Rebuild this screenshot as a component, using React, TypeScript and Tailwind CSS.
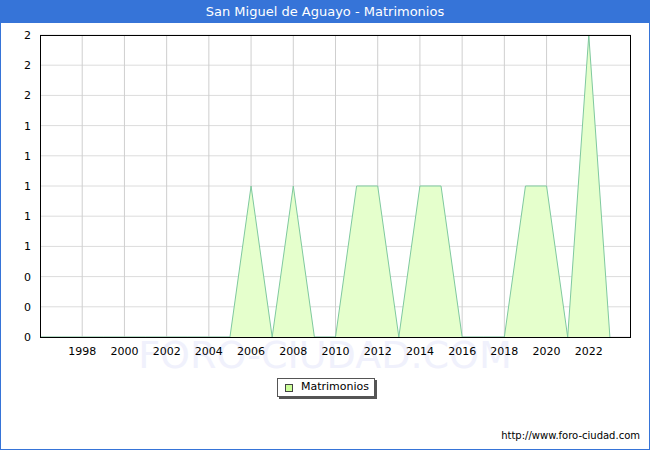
import React from "react";

const data: Record<number, number> = {2006:1,2008:1,2011:1,2012:1,2014:1,2015:1,2019:1,2020:1,2022:2};
const X = (y: number) => 40 + (y - 1996) * (591 / 28);
const Y = (v: number) => 337 - v * 151;

export default function App() {
  const years: number[] = [];
  for (let y = 1996; y <= 2023; y++) years.push(y);
  const pts = years.map((y) => `${X(y)},${Y(data[y] || 0)}`).join(" ");
  const poly = `${X(1996)},337 ${pts} ${X(2023)},337`;
  const hy = Array.from({ length: 11 }, (_, i) => 35 + i * 30.2);
  const ylabels = ["2","2","2","1","1","1","1","1","0","0","0"];
  const even = years.filter((y) => y % 2 === 0 && y >= 1998);
  return (
    <div className="w-[650px] h-[450px] relative bg-white border border-[#3674d8] overflow-hidden" style={{ fontFamily: "'DejaVu Sans', sans-serif" }}>
      <div className="h-[23px] -mx-px -mt-px bg-[#3674d8] text-white text-[13px] flex items-center justify-center">San Miguel de Aguayo - Matrimonios</div>
      <svg className="absolute left-[-1px] top-[-1px]" width="650" height="450">
        <text x="325" y="368" textAnchor="middle" fontSize="38" fill="#f0f1fc" fontFamily="'DejaVu Sans', sans-serif">FORO-CIUDAD.COM</text>
        {hy.map((y, i) => (<line key={i} x1="40" x2="631" y1={y} y2={y} stroke="#dcdcdc" />))}
        {even.map((y) => (<line key={y} x1={X(y)} x2={X(y)} y1="35" y2="337" stroke="#cfcfcf" />))}
        <polygon points={poly} fill="#e5ffcc" stroke="none" />
        <polyline points={pts} fill="none" stroke="#7fc99f" strokeWidth="1" />
        <rect x="40.5" y="35.5" width="590" height="302" fill="none" stroke="#000" />
        {hy.map((y, i) => (<text key={i} x="31" y={y + 4} textAnchor="end" fontSize="11" fill="#000">{ylabels[i]}</text>))}
        {even.map((y) => (<text key={y} x={X(y)} y="355" textAnchor="middle" fontSize="11" fill="#000">{y}</text>))}
      </svg>
      <div className="absolute left-[276px] top-[377px] w-[98px] h-[19px] bg-white border border-[#555] shadow-[2px_2px_0_#555] flex items-center text-[11px] text-black">
        <span className="ml-[7px] mr-[8px] w-[8px] h-[8px] bg-[#ccff99] border border-[#444]" />Matrimonios
      </div>
      <div className="absolute right-[9px] top-[427px] text-[10px] text-black">http://www.foro-ciudad.com</div>
    </div>
  );
}
